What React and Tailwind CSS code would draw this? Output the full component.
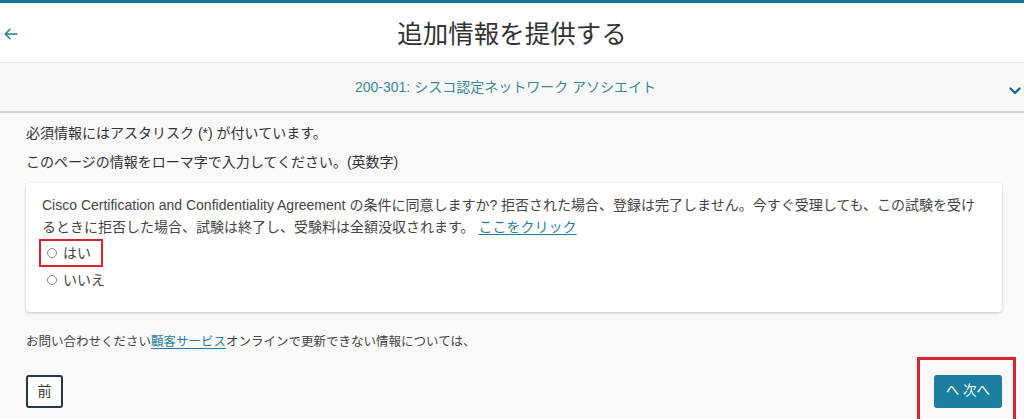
import React from "react";

const font = { fontFamily: '"Liberation Sans", "Noto Sans CJK JP", Arial, sans-serif' };

function Radio({ label }) {
  return (
    <span className="inline-flex items-center gap-[6px] text-[14px] text-[#444] leading-[22px]">
      <span className="inline-block w-[10px] h-[10px] rounded-full border border-[#888] bg-white" />
      {label}
    </span>
  );
}

export default function App() {
  return (
    <div style={font} className="w-full h-[419px] overflow-hidden bg-[#f9f9f9] text-[#333]">
      <div className="border-t-[3px] border-[#17759a] bg-white h-[62px] grid grid-cols-[1fr_auto_1fr] items-center">
        <div className="pl-[4px] pt-[3px] text-[#1a7a9c]">
          <svg width="14" height="12" viewBox="0 0 14 12" fill="none" stroke="currentColor" strokeWidth="1.4" strokeLinecap="round" strokeLinejoin="round">
            <path d="M13 6H1.5" />
            <path d="M6 1.2L1.2 6L6 10.8" />
          </svg>
        </div>
        <h1 className="text-[25.5px] font-normal text-[#333] pt-[3px]">追加情報を提供する</h1>
        <div />
      </div>
      <div className="h-[51px] bg-[#f7f7f7] border-t border-[#ebebeb] border-b-2 border-b-[#d4d4d4] grid grid-cols-[1fr_auto_1fr] items-center">
        <div />
        <div className="text-[14px] text-[#3b8899] pt-[1px] pr-[13px]">200-301: シスコ認定ネットワーク アソシエイト</div>
        <div className="flex justify-end pr-[3px] pt-[8px] text-[#1a6f8c]">
          <svg width="12" height="8" viewBox="0 0 12 8" fill="none" stroke="currentColor" strokeWidth="2.4" strokeLinecap="round" strokeLinejoin="round">
            <path d="M1.5 1.5L6 6L10.5 1.5" />
          </svg>
        </div>
      </div>
      <div className="pl-[26px] pr-[22px]">
        <p className="text-[14px] leading-[20px] pt-[10px] text-[#333]">必須情報にはアスタリスク (*) が付いています。</p>
        <p className="text-[14px] leading-[20px] mt-[9px] text-[#333]">このページの情報をローマ字で入力してください。(英数字)</p>
        <div className="mt-[11px] bg-white rounded-[4px] shadow-[0_1px_3px_rgba(0,0,0,0.22)] pl-[16px] pr-[12px] pt-[11px] pb-[21px]">
          <p className="text-[14px] leading-[22px] text-[#444]">
            Cisco Certification and Confidentiality Agreement の条件に同意しますか? 拒否された場合、登録は完了しません。今すぐ受理しても、この試験を受け
            <br />
            るときに拒否した場合、試験は終了し、受験料は全額没収されます。<a href="#" className="text-[#1f7f9b] underline underline-offset-2 ml-[4px]">ここをクリック</a>
          </p>
          <div className="relative mt-[1px] h-[28px] flex items-center pl-[5px]">
            <span className="absolute left-[-3px] top-0 w-[64px] h-[28px] border-2 border-[#d9262e]" />
            <Radio label="はい" />
          </div>
          <div className="mt-[2px] flex items-center pl-[5px]">
            <Radio label="いいえ" />
          </div>
        </div>
        <p className="mt-[20px] text-[12.5px] leading-[20px] text-[#444]">
          お問い合わせください<a href="#" className="text-[#1f7f9b] underline underline-offset-2">顧客サービス</a>オンラインで更新できない情報については、
        </p>
        <div className="mt-[23px] flex justify-between items-start">
          <button className="w-[37px] h-[33px] border-2 border-[#24384a] rounded-[3px] bg-white text-[14px] text-[#333] flex items-center justify-center">前</button>
          <div className="relative">
            <span className="absolute left-[-17px] top-[-18px] w-[99px] h-[70px] border-[3px] border-[#d9262e]" />
            <button className="w-[68px] h-[33px] rounded-[3px] bg-[#1a7fa0] text-white text-[13.5px] flex items-center justify-center">へ 次へ</button>
          </div>
        </div>
      </div>
    </div>
  );
}
